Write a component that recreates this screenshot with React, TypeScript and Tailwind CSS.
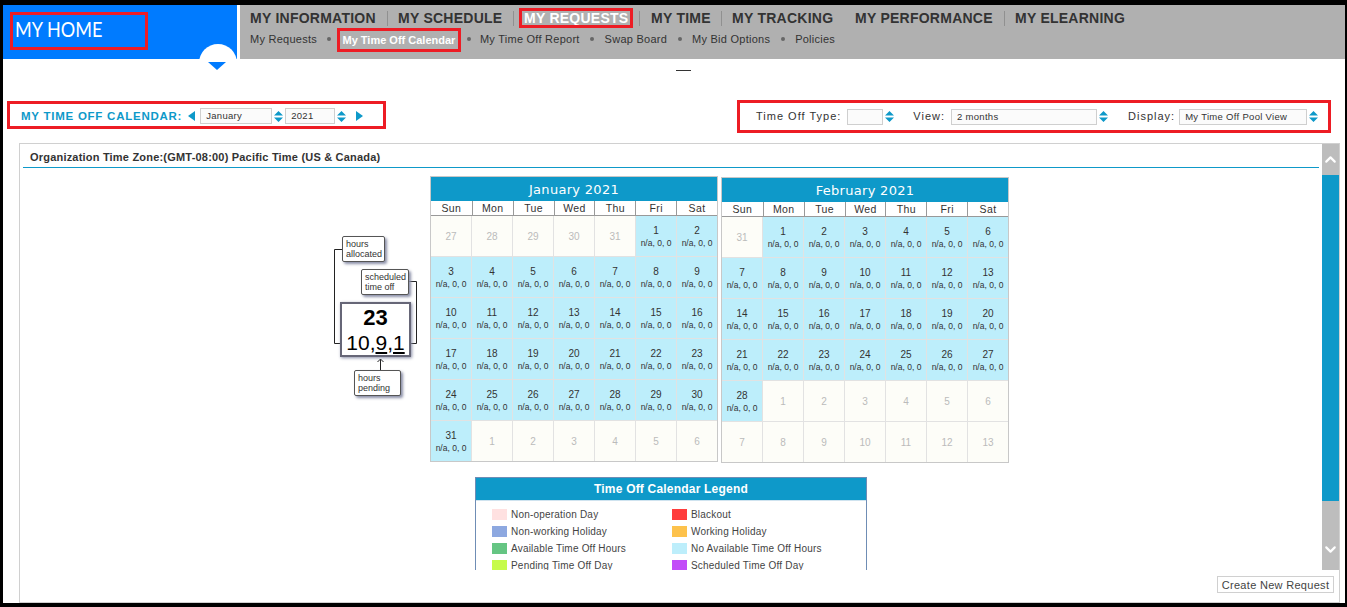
import React from 'react';
import { ChevronUp, ChevronDown } from 'lucide-react';

const arial = "font-['Liberation_Sans',Arial,sans-serif]";

const Spin = () => (
  <svg width="9" height="11" viewBox="0 0 9 11" className="shrink-0">
    <path d="M4.5 0 L9 4.5 H0 Z M0 6.5 H9 L4.5 11 Z" fill="#0e99c9" />
  </svg>
);

const Select = ({ value, className }: { value: string; className: string }) => (
  <div className={`h-[16px] border border-[#cfcfcf] bg-[#fbfbfb] pl-[5px] text-[9.5px] leading-[14px] tracking-[0.3px] text-[#333] ${className}`}>
    {value}
  </div>
);

type Cell = { d: number; on: boolean };

const range = (from: number, to: number, on: boolean): Cell[] => {
  const out: Cell[] = [];
  for (let i = from; i <= to; i++) out.push({ d: i, on });
  return out;
};

const january = [...range(27, 31, false), ...range(1, 31, true), ...range(1, 6, false)];
const february = [...range(31, 31, false), ...range(1, 28, true), ...range(1, 13, false)];

const days = ['Sun', 'Mon', 'Tue', 'Wed', 'Thu', 'Fri', 'Sat'];

const Month = ({ title, cells, className }: { title: string; cells: Cell[]; className: string }) => (
  <div className={`border-[1.5px] border-[#c8c8c8] bg-white ${className}`}>
    <div className="flex h-[24px] items-center justify-center bg-[#0e99c9] pt-px font-['DejaVu_Sans',sans-serif] text-[13px] tracking-[0.3px] text-white">
      {title}
    </div>
    <div className="grid h-[15px] grid-cols-7 border-b border-[#999]">
      {days.map((d, i) => (
        <div key={d} className={`text-center text-[10.5px] leading-[14px] tracking-[0.4px] text-[#333] ${i > 0 ? 'border-l border-[#999]' : ''}`}>
          {d}
        </div>
      ))}
    </div>
    <div className="grid grid-cols-7 gap-px bg-[#e2e2e2]">
      {cells.map((c, i) => (
        <div
          key={i}
          className={`flex h-[40px] flex-col items-center justify-center text-center ${c.on ? 'bg-[#bdeefb] text-[#333]' : 'bg-[#fdfdf8] text-[#bbb]'}`}
        >
          <span className={`text-[10px] leading-[13px] ${c.on ? 'mb-px' : ''}`}>{c.d}</span>
          {c.on && <span className="text-[8.5px] leading-[11px] text-[#333]">n/a, 0, 0</span>}
        </div>
      ))}
    </div>
  </div>
);

const legend = [
  ['Non-operation Day', 'bg-[#ffe1e1]', 'Blackout', 'bg-[#ff3c3c]'],
  ['Non-working Holiday', 'bg-[#8da8e0]', 'Working Holiday', 'bg-[#fdc24c]'],
  ['Available Time Off Hours', 'bg-[#65c583]', 'No Available Time Off Hours', 'bg-[#bdeefb]'],
  ['Pending Time Off Day', 'bg-[#c6fb4a]', 'Scheduled Time Off Day', 'bg-[#c24cf8]'],
];

const Note = ({ className, children }: { className: string; children: React.ReactNode }) => (
  <div className={`absolute rounded-[2px] border border-[#555] bg-white pl-[3px] pt-[2px] text-[9px] leading-[10px] text-[#333] shadow-[2px_2px_3px_#8a8fa8] ${className}`}>
    {children}
  </div>
);

// legend diagram: "what each number in a day cell means"
const Key = () => (
  <div className="relative ml-[310px] mt-[9px] h-[285px] w-[100px] shrink-0">
    <svg width="100" height="200" className="absolute left-0 top-0" fill="none" stroke="#222" strokeWidth="1">
      <path d="M12 72.5 H4.5 V166.5 H15" />
      <path d="M12 163.5 L15 166.5 L12 169.5" />
      <path d="M79 104.5 H86.5 V166.5 H73" />
      <path d="M76 163.5 L73 166.5 L76 169.5" />
      <path d="M50.5 193 V182" />
      <path d="M47.5 185 L50.5 182 L53.5 185" />
    </svg>
    <Note className="left-[12px] top-[59px] h-[26px] w-[43px]">
      hours
      <br />
      allocated
    </Note>
    <Note className="left-[31px] top-[92px] h-[26px] w-[48px]">
      scheduled
      <br />
      time off
    </Note>
    <div className="absolute left-[10px] top-[125px] h-[55px] w-[71px] border-2 border-[#667] bg-white text-center text-black shadow-[1px_1px_3px_#8a8fa8]">
      <div className="text-[22px] font-bold leading-[27px]">23</div>
      <div className="text-[21px] leading-[24px]">
        10,<span className="underline">9</span>,<span className="underline">1</span>
      </div>
    </div>
    <Note className="left-[24px] top-[193px] h-[26px] w-[47px]">
      hours
      <br />
      pending
    </Note>
  </div>
);

const nav = [
  { label: 'MY INFORMATION', cls: 'w-[148px] text-[#333]' },
  { label: 'MY SCHEDULE', cls: 'w-[126px] text-[#333]' },
  { label: 'MY REQUESTS', cls: 'w-[127px] text-white' },
  { label: 'MY TIME', cls: 'w-[81px] text-[#333]' },
  { label: 'MY TRACKING', cls: 'w-[123px] text-[#333]' },
  { label: 'MY PERFORMANCE', cls: 'w-[160px] text-[#333]' },
  { label: 'MY ELEARNING', cls: 'w-[120px] text-[#333]' },
];

const Bullet = () => <span className="mx-[10.5px] h-[4px] w-[4px] shrink-0 rounded-full bg-[#666]" />;

export default function App() {
  return (
    <div className={`h-[607px] w-[1347px] overflow-hidden bg-black pb-[4px] pl-[3px] pr-[2px] pt-[5px] ${arial}`}>
      <div className="flex h-full flex-col bg-white">
        {/* top bar */}
        <div className="flex h-[54px] shrink-0">
          <div className="relative h-full w-[234px] shrink-0 bg-[#007bff] pl-[7px] pt-[7px]">
            <div className="flex h-[38px] w-[138px] items-center border-[3px] border-[#ed1c24] pb-[6px] pl-[2px] font-['Lato',sans-serif] text-[22px] text-white">
              <span className="origin-left scale-x-[0.82]">MY HOME</span>
            </div>
            <div className="absolute left-[196px] top-[39px] z-10 h-[38px] w-[38px] rounded-full bg-white" />
            <svg width="18" height="8" className="absolute left-[205px] top-[57px] z-10">
              <path d="M0 0 H18 L9 8 Z" fill="#007bff" />
            </svg>
          </div>
          <div className="ml-[3px] flex-1 bg-[#b0b0b0] pl-[10px]">
            <div className="mt-[3px] flex h-[20px] items-center text-[14px] font-bold tracking-[0.25px]">
              {nav.map((n, i) => (
                <div key={n.label} className={`relative flex h-full items-center ${n.cls}`}>
                  {i === 2 && <span className="absolute left-[-5px] top-0 h-[20px] w-[114px] border-[3px] border-[#ed1c24]" />}
                  {n.label}
                  {i !== 4 && i !== 6 && <span className={`absolute top-[3px] h-[15px] w-px bg-[#909090] ${i === 2 ? 'right-[11px]' : 'right-[10px]'}`} />}
                </div>
              ))}
            </div>
            <div className="flex h-[24px] items-center pb-[2px] text-[11px] tracking-[0.25px] text-[#333]">
              <span>My Requests</span>
              <Bullet />
              <span className="mb-[-2px] ml-[-5px] flex h-[24px] w-[124px] items-center justify-center border-[3px] border-[#ed1c24] font-bold tracking-normal text-white">My Time Off Calendar</span>
              <span className="ml-[6px] mr-[9px] h-[4px] w-[4px] shrink-0 rounded-full bg-[#666]" />
              <span>My Time Off Report</span>
              <Bullet />
              <span>Swap Board</span>
              <Bullet />
              <span>My Bid Options</span>
              <Bullet />
              <span>Policies</span>
            </div>
          </div>
        </div>

        <div className="ml-[673px] mt-[11px] h-px w-[15px] bg-[#333]" />

        {/* filter row */}
        <div className="mt-[29px] flex h-[33px] shrink-0 items-start justify-between pl-[4px] pr-[14px]">
          <div className="mt-[1px] flex h-[28px] w-[379px] items-center border-[3px] border-[#ed1c24] pl-[11px] pt-[2px]">
            <span className="mt-[2px] text-[11.5px] font-bold tracking-[0.75px] text-[#0e99c9]">MY TIME OFF CALENDAR:</span>
            <svg width="7" height="10" className="ml-[6px]"><path d="M7 0 V10 L0 5 Z" fill="#0e99c9" /></svg>
            <Select value="January" className="ml-[5px] w-[72px]" />
            <div className="ml-[2px]"><Spin /></div>
            <Select value="2021" className="ml-[2px] w-[50px]" />
            <div className="ml-[2px]"><Spin /></div>
            <svg width="7" height="10" className="ml-[10px]"><path d="M0 0 V10 L7 5 Z" fill="#0e99c9" /></svg>
          </div>
          <div className="flex h-[33px] w-[594px] items-center border-[3px] border-[#ed1c24] pl-[16px] text-[11px] tracking-[1px] text-[#333]">
            <span>Time Off Type:</span>
            <Select value="" className="ml-[6px] w-[36px]" />
            <div className="ml-[2px]"><Spin /></div>
            <span className="ml-[19px]">View:</span>
            <Select value="2 months" className="ml-[6px] w-[146px]" />
            <div className="ml-[2px]"><Spin /></div>
            <span className="ml-[20px]">Display:</span>
            <Select value="My Time Off Pool View" className="ml-[4px] w-[128px]" />
            <div className="ml-[2px]"><Spin /></div>
          </div>
        </div>

        {/* main panel */}
        <div className="ml-[16px] mr-[5px] mt-[10px] flex min-h-0 flex-1 flex-col border border-[#d0d0d0]">
          <div className="flex h-[426px] shrink-0">
            <div className="min-w-0 flex-1 overflow-hidden">
              <div className="mx-[3px] flex h-[24px] items-center border-b border-[#0e99c9] pl-[7px] pt-[3px] text-[11px] font-bold tracking-[0.2px] text-[#333]">
                Organization Time Zone:(GMT-08:00) Pacific Time (US &amp; Canada)
              </div>
              <div className="flex items-start">
                <Key />
                <div className="flex items-start gap-[3px] pt-[8px]">
                  <Month title="January 2021" cells={january} className="w-[288px]" />
                  <Month title="February 2021" cells={february} className="mt-[1px] w-[288px]" />
                </div>
              </div>
              <div className="ml-[455px] mt-[14px] w-[392px] border-[1.5px] border-[#6f8db5] bg-white">
                <div className="flex h-[23px] items-center justify-center border-b border-[#cfe3ef] bg-[#0e99c9] text-[12px] font-bold tracking-[0.2px] text-white">
                  Time Off Calendar Legend
                </div>
                <div className="flex flex-col gap-[6px] pl-[16px] pt-[8px]">
                  {legend.map(r => (
                    <div key={r[0]} className="flex h-[11px] items-center text-[10px] tracking-[0.2px] text-[#444]">
                      <div className="flex w-[180px] items-center gap-[4px]">
                        <span className={`h-[11px] w-[15px] ${r[1]}`} />
                        {r[0]}
                      </div>
                      <div className="flex items-center gap-[4px]">
                        <span className={`h-[11px] w-[15px] ${r[3]}`} />
                        {r[2]}
                      </div>
                    </div>
                  ))}
                </div>
              </div>
            </div>
            <div className="flex w-[17px] shrink-0 flex-col bg-[#bdbdbd]">
              <div className="flex h-[31px] items-center justify-center">
                <ChevronUp size={17} strokeWidth={3} className="text-white" />
              </div>
              <div className="h-[326px] bg-[#0e99c9]" />
              <div className="flex h-[69px] items-end justify-center pb-[12px]">
                <ChevronDown size={17} strokeWidth={3} className="text-white" />
              </div>
            </div>
          </div>
          <div className="flex justify-end pr-[5px] pt-[6px]">
            <button className="h-[17px] w-[117px] border border-[#d0d0d0] bg-white pt-px text-[11px] leading-[15px] tracking-[0.3px] text-[#444]">
              Create New Request
            </button>
          </div>
        </div>
      </div>
    </div>
  );
}
